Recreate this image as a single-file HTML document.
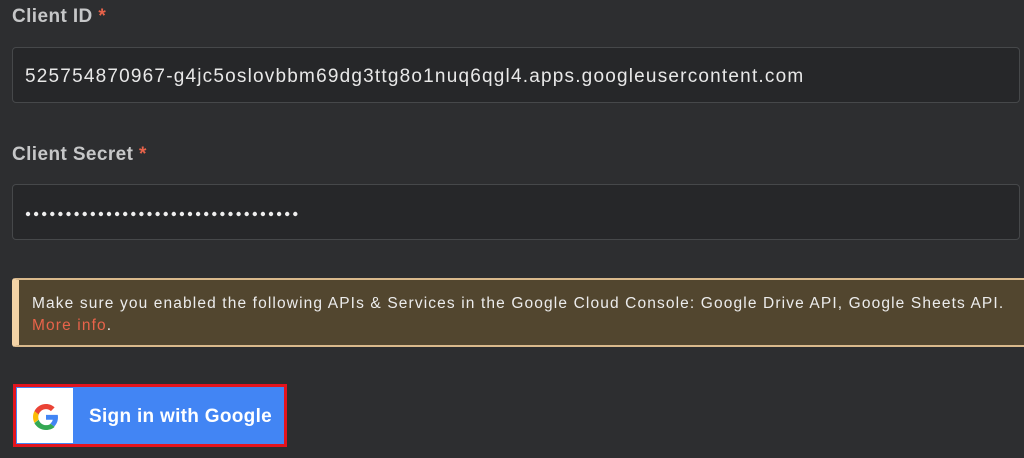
<!DOCTYPE html>
<html><head><style>
body{margin:0;width:1024px;height:458px;background:#2d2e30;overflow:hidden;font-family:"Liberation Sans",sans-serif;position:relative}
.lbl{position:absolute;left:12px;font-size:19px;font-weight:bold;color:#c6c7c8;letter-spacing:0.4px}
.lbl span{color:#e8634a}
.inp{position:absolute;left:12px;width:1008px;height:56px;background:#262729;border:1px solid #46484a;border-radius:4px;box-sizing:border-box}
.txt{position:absolute;left:12px;top:18px;font-size:19px;letter-spacing:1.2px;color:#e8e8e8;white-space:nowrap}
.note{position:absolute;left:12px;top:278px;width:1020px;height:69px;background:#52462f;border:2px solid #d9b98c;border-left:7px solid #f3d3a6;box-sizing:border-box;border-radius:3px;color:#ececec;font-size:15.5px;letter-spacing:1.13px;line-height:22px;padding:13px 0 0 13px;white-space:nowrap}
.note a{color:#e8634a}
.btn{position:absolute;left:13px;top:384px;width:274px;height:63px;border:3px solid #e3141e;box-sizing:border-box;background:#4285f4}
.g{position:absolute;left:1px;top:1px;width:56px;height:55px;background:#fff}
.bt{position:absolute;left:73px;top:19px;color:#fff;font-size:19px;font-weight:bold;letter-spacing:0.3px}
</style></head><body>
<div class="lbl" style="top:6px">Client ID <span>*</span></div>
<div class="inp" style="top:47px"><div class="txt">525754870967-g4jc5oslovbbm69dg3ttg8o1nuq6qgl4.apps.googleusercontent.com</div></div>
<div class="lbl" style="top:144px">Client Secret <span>*</span></div>
<div class="inp" style="top:184px"><svg style="position:absolute;left:12px;top:26px" width="280" height="6">
<g fill="#eee">
<circle cx="3" cy="3" r="2.2"/><circle cx="11.1" cy="3" r="2.2"/><circle cx="19.2" cy="3" r="2.2"/><circle cx="27.3" cy="3" r="2.2"/><circle cx="35.4" cy="3" r="2.2"/><circle cx="43.5" cy="3" r="2.2"/><circle cx="51.6" cy="3" r="2.2"/><circle cx="59.7" cy="3" r="2.2"/><circle cx="67.8" cy="3" r="2.2"/><circle cx="75.9" cy="3" r="2.2"/><circle cx="84" cy="3" r="2.2"/><circle cx="92.1" cy="3" r="2.2"/><circle cx="100.2" cy="3" r="2.2"/><circle cx="108.3" cy="3" r="2.2"/><circle cx="116.4" cy="3" r="2.2"/><circle cx="124.5" cy="3" r="2.2"/><circle cx="132.6" cy="3" r="2.2"/><circle cx="140.7" cy="3" r="2.2"/><circle cx="148.8" cy="3" r="2.2"/><circle cx="156.9" cy="3" r="2.2"/><circle cx="165" cy="3" r="2.2"/><circle cx="173.1" cy="3" r="2.2"/><circle cx="181.2" cy="3" r="2.2"/><circle cx="189.3" cy="3" r="2.2"/><circle cx="197.4" cy="3" r="2.2"/><circle cx="205.5" cy="3" r="2.2"/><circle cx="213.6" cy="3" r="2.2"/><circle cx="221.7" cy="3" r="2.2"/><circle cx="229.8" cy="3" r="2.2"/><circle cx="237.9" cy="3" r="2.2"/><circle cx="246" cy="3" r="2.2"/><circle cx="254.1" cy="3" r="2.2"/><circle cx="262.2" cy="3" r="2.2"/><circle cx="270.3" cy="3" r="2.2"/>
</g></svg></div>
<div class="note">Make sure you enabled the following APIs &amp; Services in the Google Cloud Console: Google Drive API, Google Sheets API.<br><a>More info</a>.</div>
<div class="btn"><div class="g"><svg style="position:absolute;left:16px;top:16px" width="26" height="26" viewBox="0 0 48 48">
<path fill="#EA4335" d="M24 9.5c3.5 0 6.6 1.2 9.1 3.6l6.8-6.8C35.8 2.4 30.3 0 24 0 14.6 0 6.6 5.4 2.6 13.3l7.9 6.2C12.4 13.7 17.7 9.5 24 9.5z"/>
<path fill="#4285F4" d="M46.1 24.6c0-1.6-.1-3.1-.4-4.6H24v9h12.4c-.5 2.9-2.2 5.3-4.6 7l7.2 5.6c4.2-3.9 7.1-9.700 7.1-17z"/>
<path fill="#FBBC05" d="M10.5 28.6c-.5-1.4-.8-3-.8-4.6s.3-3.2.8-4.6l-7.9-6.2C.9 16.5 0 20.1 0 24s.9 7.5 2.6 10.8l7.9-6.2z"/>
<path fill="#34A853" d="M24 48c6.5 0 11.9-2.1 15.9-5.8l-7.2-5.6c-2.2 1.5-5.1 2.4-8.7 2.4-6.3 0-11.6-4.2-13.5-10l-7.9 6.2C6.6 42.6 14.6 48 24 48z"/>
</svg></div><div class="bt">Sign in with Google</div></div>
</body></html>
